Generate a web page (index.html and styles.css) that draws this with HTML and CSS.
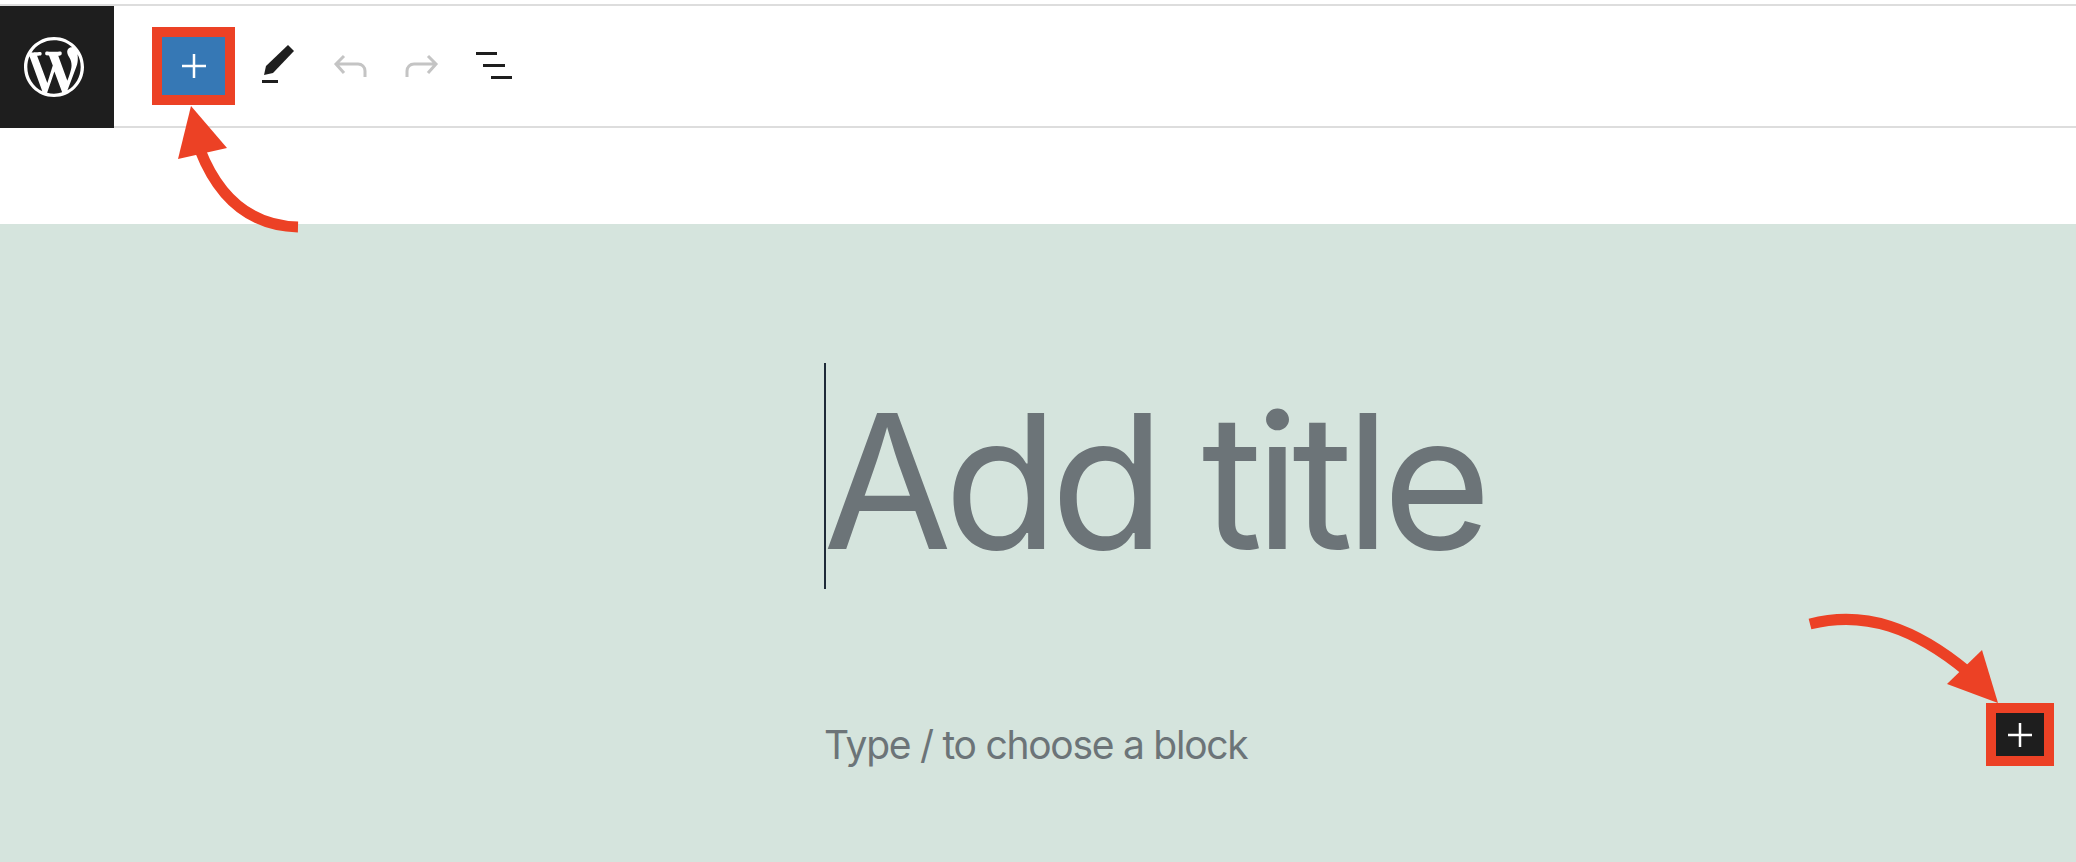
FILE: index.html
```html
<!DOCTYPE html>
<html lang="en">
<head>
    <meta charset="UTF-8">
    <meta name="viewport" content="width=device-width, initial-scale=1.0">
    <title>Add title</title>
    <link rel="stylesheet" href="styles.css">
</head>
<body>

    <header class="editor-header">
        <a href="#" class="site-logo">
            <svg width="60" height="60" viewBox="0 0 20 20" fill="#fff"><path d="M20 10c0-5.51-4.49-10-10-10C4.48 0 0 4.49 0 10c0 5.52 4.48 10 10 10 5.51 0 10-4.48 10-10zM7.78 15.37L4.37 6.22c.55-.02 1.17-.08 1.17-.08.5-.06.44-1.13-.06-1.11 0 0-1.45.11-2.37.11-.18 0-.37 0-.58-.01C4.12 2.69 6.87 1.11 10 1.11c2.33 0 4.45.87 6.05 2.34-.68-.11-1.65.39-1.65 1.58 0 .74.45 1.36.9 2.1.35.61.55 1.36.55 2.46 0 1.49-1.4 5-1.4 5l-3.03-8.37c.54-.02.82-.17.82-.17.5-.05.44-1.25-.06-1.22 0 0-1.44.12-2.38.12-.87 0-2.33-.12-2.33-.12-.5-.03-.56 1.2-.06 1.22l.92.08 1.26 3.41zM17.41 10c.24-.64.74-1.87.43-4.25.7 1.29 1.05 2.71 1.05 4.25 0 3.29-1.73 6.24-4.4 7.78.97-2.59 1.94-5.2 2.92-7.78zM6.1 18.09C3.12 16.65 1.11 13.53 1.11 10c0-1.3.23-2.48.72-3.59C3.25 10.3 4.67 14.2 6.1 18.09zm4.03-6.63l2.58 6.98c-.86.29-1.76.45-2.71.45-.79 0-1.57-.11-2.29-.33.81-2.38 1.62-4.74 2.42-7.1z"/></svg>
        </a>
        <div class="toolbar">
            <button class="inserter inserter-blue">
                <svg width="24" height="24" viewBox="0 0 24 24"><path class="plus" d="M12 0v24M0 12h24"/></svg>
            </button>
            <button class="tool">
                <svg width="48" height="48" viewBox="0 0 48 48" fill="#1e1e1e"><path d="M10 33l2-9 22-21 6 6-21 22z"/><rect x="8" y="38" width="16" height="3"/></svg>
            </button>
            <button class="tool">
                <svg width="48" height="48" viewBox="0 0 48 48" class="line-icon"><path d="M39 35v-6c0-4-3-7-7-7H11M18 14l-8 8 8 9"/></svg>
            </button>
            <button class="tool">
                <svg width="48" height="48" viewBox="0 0 48 48" class="line-icon"><path d="M9 35v-6c0-4 3-7 7-7h21M30 14l8 8-8 9"/></svg>
            </button>
            <button class="tool">
                <svg width="48" height="48" viewBox="0 0 48 48" fill="#1e1e1e"><rect x="6" y="10" width="21" height="3"/><rect x="13" y="22" width="22" height="3"/><rect x="21" y="34" width="21" height="3"/></svg>
            </button>
        </div>
    </header>

    <main class="canvas">
        <h1 class="post-title">Add title</h1>
        <div class="block-row">
            <p class="block-hint">Type / to choose a block</p>
            <button class="inserter inserter-dark">
                <svg width="24" height="24" viewBox="0 0 24 24"><path class="plus" d="M12 0v24M0 12h24"/></svg>
            </button>
        </div>
    </main>

    <!-- callout arrows drawn over the screenshot -->
    <svg class="callouts" width="2076" height="862" viewBox="0 0 2076 862">
        <path class="callout-line" d="M298 227C258 226 222 206 200 150"/>
        <path class="callout-head" d="M191 106L178 159L227 148Z"/>
        <path class="callout-line" d="M1810 624C1865 610 1915 628 1968 672"/>
        <path class="callout-head" d="M1998 703L1982 650L1947 684Z"/>
    </svg>

</body>
</html>
```

FILE: styles.css
```css
body {
    font-family: Inter, "Liberation Sans", sans-serif;
    margin: 0;
    background-color: #fff;
    overflow: hidden;
}
button {
    padding: 0;
    background: none;
    border: none;
    cursor: pointer;
}
.editor-header {
    display: flex;
    margin-top: 4px;
    height: 218px;
    border-top: 2px solid #ddd;
    align-items: flex-start;
}
.site-logo {
    display: flex;
    align-items: center;
    width: 114px;
    height: 122px;
    padding-left: 24px;
    box-sizing: border-box;
    background-color: #1e1e1e;
}
.toolbar {
    flex: 1;
    display: flex;
    align-items: center;
    gap: 24px;
    height: 120px;
    padding-left: 38px;
    border-bottom: 2px solid #ddd;
}
.tool {
    display: flex;
    width: 48px;
    height: 48px;
}
.inserter {
    display: flex;
    align-items: center;
    justify-content: center;
    box-sizing: border-box;
    border: 10px solid #ec4125;
}
.inserter-blue {
    width: 83px;
    height: 78px;
    margin-right: -5px;
    background-color: #3678b5;
}
.inserter-dark {
    width: 68px;
    height: 63px;
    background-color: #1e1e1e;
}
.plus {
    fill: none;
    stroke: #fff;
    stroke-width: 2.5;
}
.line-icon {
    fill: none;
    stroke: #c4c4c4;
    stroke-width: 3;
}
.canvas {
    box-sizing: border-box;
    height: 638px;
    padding: 139px 22px 0 824px;
    background-color: #d5e4dd;
}
.post-title {
    margin: 0;
    padding-top: 10px;
    border-left: 2px solid #1e2a38;
    font-size: 187px;
    font-weight: 400;
    line-height: 216px;
    letter-spacing: -8px;
    text-indent: -3px;
    color: #6c7478;
}
.block-row {
    display: flex;
    justify-content: space-between;
    align-items: flex-start;
    margin-top: 114px;
}
.block-hint {
    margin: 18px 0 0;
    font-size: 39px;
    line-height: 48px;
    letter-spacing: -1.26px;
    color: #6c7478;
}
.callouts {
    position: absolute;
    top: 0;
    left: 0;
    pointer-events: none;
}
.callout-line {
    fill: none;
    stroke: #ec4125;
    stroke-width: 11;
}
.callout-head {
    fill: #ec4125;
}
```
